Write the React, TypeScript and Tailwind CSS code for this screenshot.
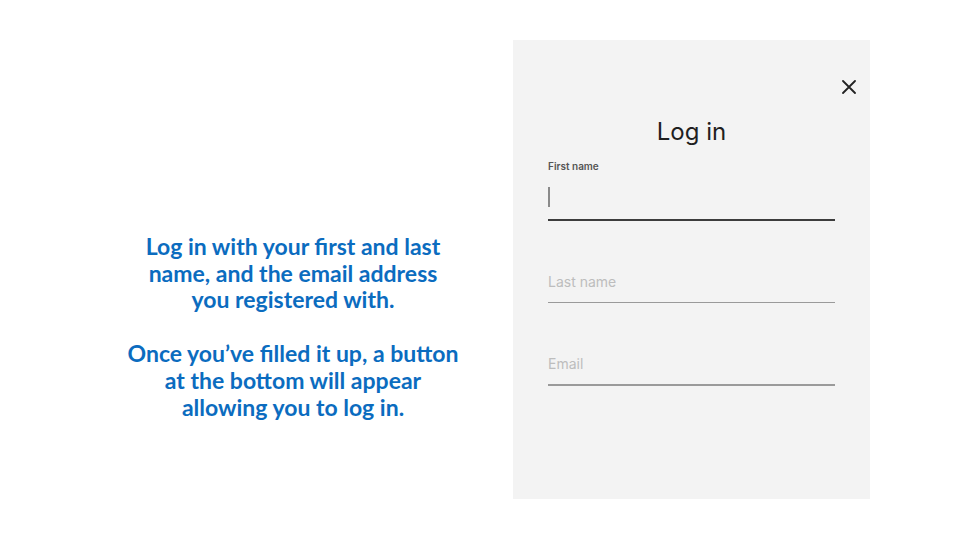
import React from 'react';

const blurb = [
  ['Log in with your first and last', 'name, and the email address', 'you registered with.'],
  ['Once you\u2019ve filled it up, a button', 'at the bottom will appear', 'allowing you to log in.'],
];

function Field({ placeholder }: { placeholder: string }) {
  return (
    <div className="flex flex-col">
      <div className="h-[21px] text-[14px] leading-[21px] text-[#bdbdbd]">{placeholder}</div>
      <div className="mt-[10px] h-[1.5px] bg-[#9a9a9a]" />
    </div>
  );
}

export default function App() {
  return (
    <div className="w-[960px] h-[540px] bg-white flex pt-[40px] font-['Inter',sans-serif] overflow-hidden">
      {/* Left explanation */}
      <div className="w-[513px] pl-[73px] pt-[193px] flex flex-col gap-[27px] font-['Lato','Open_Sans',sans-serif] font-bold text-[23px] leading-[26.7px] text-[#0b6cbf] text-center">
        {blurb.map((para, i) => (
          <div key={i}>
            {para.map((line) => (
              <div key={line}>{line}</div>
            ))}
          </div>
        ))}
      </div>

      {/* Login panel */}
      <div className="w-[357px] h-[459px] bg-[#f3f3f3] flex flex-col px-[35px]">
        <div className="flex justify-end pt-[40px] -mr-[21px]">
          <svg width="14" height="14" viewBox="0 0 14 14" className="text-[#222]">
            <path d="M1 1L13 13M13 1L1 13" stroke="currentColor" strokeWidth="1.8" strokeLinecap="round" />
          </svg>
        </div>
        <h1 className="mt-[23px] text-center text-[24px] leading-[30px] text-[#1f1f1f]">Log in</h1>
        <div className="mt-[13px] text-[10px] leading-[12px] font-semibold text-[#555]">First name</div>
        <div className="mt-[14px] h-[21px] flex items-center">
          <div className="w-[1.5px] h-[20px] bg-[#8a8a8a]" />
        </div>
        <div className="mt-[12px] h-[1.5px] bg-[#3c3c3c]" />
        <div className="mt-[50px]">
          <Field placeholder="Last name" />
        </div>
        <div className="mt-[50px]">
          <Field placeholder="Email" />
        </div>
      </div>
    </div>
  );
}
